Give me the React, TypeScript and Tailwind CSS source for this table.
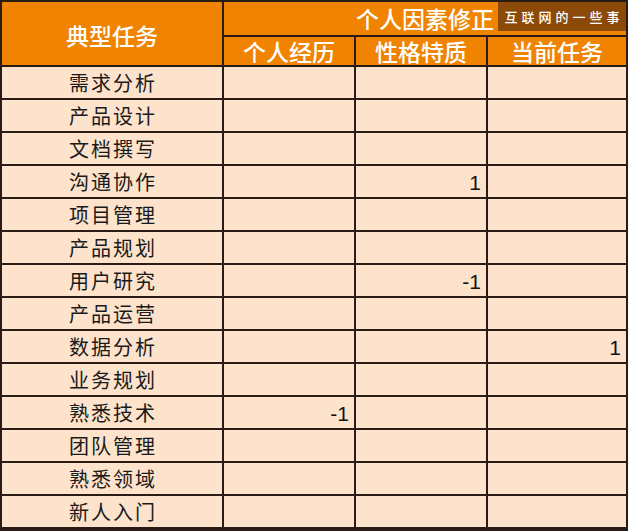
const rows: [string, string, string, string][] = [
  ['需求分析', '', '', ''],
  ['产品设计', '', '', ''],
  ['文档撰写', '', '', ''],
  ['沟通协作', '', '1', ''],
  ['项目管理', '', '', ''],
  ['产品规划', '', '', ''],
  ['用户研究', '', '-1', ''],
  ['产品运营', '', '', ''],
  ['数据分析', '', '', '1'],
  ['业务规划', '', '', ''],
  ['熟悉技术', '-1', '', ''],
  ['团队管理', '', '', ''],
  ['熟悉领域', '', '', ''],
  ['新人入门', '', '', ''],
];

const cjk = { fontFamily: '"Noto Sans CJK SC", "Liberation Sans", sans-serif' };
const num = { fontFamily: '"Liberation Sans", Arial, sans-serif' };

export default function App() {
  return (
    <div className="w-[628px] h-[531px] bg-[#2a1c14] pt-[2px] px-[2px] pb-[4px]" style={cjk}>
      <div className="grid grid-cols-[220px_130px_130px_138px] grid-rows-[33px_28px] gap-[2px]">
        <div className="row-span-2 bg-[#f08300] text-white text-[23px] font-medium flex items-center justify-center pt-[4px]">
          典型任务
        </div>
        <div className="col-span-3 relative bg-[#f08300] text-white text-[23px] font-medium flex items-center justify-center">
          <span className="leading-none">个人因素修正</span>
          <div className="absolute right-0 top-0 h-[29px] w-[128px] bg-[#8c4a08] text-white text-[13px] font-medium tracking-[4px] flex items-center justify-center pl-[4px]">
            互联网的一些事
          </div>
        </div>
        {['个人经历', '性格特质', '当前任务'].map((h) => (
          <div key={h} className="bg-[#f08300] text-white text-[23px] font-medium flex items-center justify-center leading-none">
            {h}
          </div>
        ))}
      </div>
      <div className="grid grid-cols-[220px_130px_130px_138px] auto-rows-[31px] gap-[2px] mt-[2px]">
        {rows.map(([t, a, b, c]) => (
          <div key={t} className="contents">
            <div className="bg-[#fde3cc] text-[#1a1a1a] text-[20px] tracking-[2px] flex items-center justify-center pl-[2px]">
              {t}
            </div>
            {[a, b, c].map((v, i) => (
              <div key={i} className="bg-[#fde3cc] text-[#111] text-[21px] flex items-center justify-end pr-[5px] pt-[2px]" style={num}>
                {v}
              </div>
            ))}
          </div>
        ))}
      </div>
    </div>
  );
}
